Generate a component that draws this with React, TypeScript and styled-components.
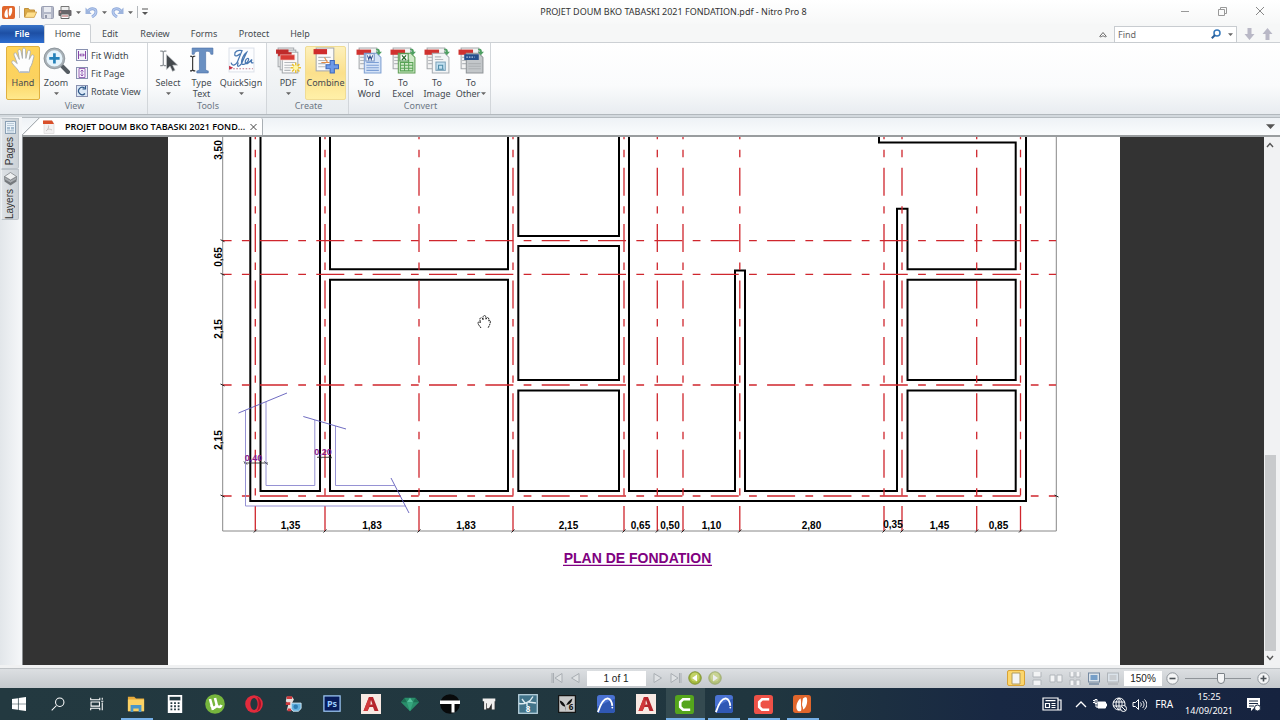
import React from "react";
import styled, { createGlobalStyle, css } from "styled-components";

const GlobalStyle = createGlobalStyle`
  * { box-sizing: border-box; }
  html, body { margin: 0; padding: 0; }
  body { font-family: "Noto Sans", "Open Sans", sans-serif; font-size: 9px; color: #444a50; background: #fff; }
  button, input { font: inherit; color: inherit; }
  button { border: 0; padding: 0; background: none; }
  svg { display: block; flex: none; }
`;

const Window = styled.div`
  display: flex;
  flex-direction: column;
  height: 100vh;
  min-height: 400px;
  overflow: hidden;
`;

/* ---------- title bar ---------- */

const TitleBar = styled.header`
  display: grid;
  grid-template-columns: auto 1fr auto;
  align-items: center;
  flex: none;
  height: 24px;
  padding: 0 14px 0 2px;
  background: linear-gradient(#ffffff, #f7f8f8);
`;

const QuickAccess = styled.div`
  display: flex;
  align-items: center;
  gap: 4px;
`;

const Divider = styled.span`
  width: 1px;
  height: 12px;
  background: #b4b8bc;
`;

const WindowTitle = styled.h1`
  margin: 0;
  padding-left: 20px;
  text-align: center;
  font-size: 9px;
  font-weight: 400;
  line-height: 24px;
  color: #333;
  white-space: nowrap;
`;

const WindowButtons = styled.div`
  display: flex;
  justify-content: flex-end;
  gap: 24px;
`;

const IconButton = styled.button`
  display: flex;
  align-items: center;
  justify-content: center;
`;

/* ---------- ribbon ---------- */

const TabRow = styled.nav`
  display: flex;
  align-items: flex-end;
  flex: none;
  height: 19px;
  padding-right: 7px;
  background: #f6f7f7;
  box-shadow: inset 0 -1px #ccd0d4;
`;

const RibbonTab = styled.button<{ $width: number; $kind?: "file" | "active" }>`
  width: ${(p) => p.$width}px;
  height: 18px;
  line-height: 18px;
  text-align: center;
  ${(p) =>
    p.$kind === "file" &&
    css`
      background: linear-gradient(#3873c8, #1d4fa4 45%, #2d6dd0);
      border-radius: 2px 2px 0 0;
      color: #fff;
      font-weight: 600;
    `}
  ${(p) =>
    p.$kind === "active" &&
    css`
      height: 19px;
      background: #fff;
      border: 1px solid #ccd0d4;
      border-bottom: 0;
      border-radius: 2px 2px 0 0;
    `}
`;

const FindArea = styled.div`
  display: flex;
  align-items: center;
  gap: 7px;
  height: 18px;
  margin-left: auto;
`;

const FindBox = styled.label`
  display: flex;
  align-items: center;
  gap: 7px;
  width: 123px;
  height: 17px;
  padding: 0 3px;
  background: #fff;
  border: 1px solid #c8ccd0;
`;

const FindInput = styled.input`
  flex: 1;
  min-width: 0;
  height: 15px;
  padding: 0;
  border: 0;
  outline: 0;
  background: none;
  &::placeholder { color: #666; opacity: 1; }
`;

const Ribbon = styled.section`
  display: flex;
  flex: none;
  height: 72px;
  background: linear-gradient(#ffffff, #fafbfc 60%, #e8ecf0);
  border-bottom: 1px solid #b2b8bd;
`;

const Group = styled.div<{ $width: number; $tinted?: boolean }>`
  display: flex;
  flex-direction: column;
  width: ${(p) => p.$width}px;
  padding-top: 3px;
  border-right: 1px solid #d2d6da;
  background: ${(p) => (p.$tinted ? "linear-gradient(#f8f9fa, #e9edf0)" : "none")};
`;

const GroupItems = styled.div<{ $pad: number }>`
  display: flex;
  height: 54px;
  padding-left: ${(p) => p.$pad}px;
`;

const GroupLabel = styled.span`
  padding-left: 2px;
  text-align: center;
  line-height: 12px;
  color: #6c7784;
`;

const ToolButton = styled.button<{ $width: number; $state?: "on" | "hover" }>`
  display: flex;
  flex-direction: column;
  align-items: center;
  flex: none;
  gap: 3px;
  width: ${(p) => p.$width}px;
  height: 54px;
  line-height: 11px;
  border: 1px solid transparent;
  border-radius: 2px;
  white-space: nowrap;
  text-align: center;
  ${(p) =>
    p.$state === "on" &&
    css`
      border-color: #e0b040;
      background: linear-gradient(#ffd45a, #fbd25f 60%, #ffe98d);
    `}
  ${(p) =>
    p.$state === "hover" &&
    css`
      border-color: #f0dc94;
      background: linear-gradient(#fdf0bb, #fbe08c 50%, #fff0a8);
    `}
`;

const SmallTools = styled.div`
  display: flex;
  flex-direction: column;
  padding-left: 4px;
`;

const SmallTool = styled.button`
  display: flex;
  align-items: center;
  gap: 3px;
  height: 18px;
  white-space: nowrap;
`;

/* ---------- work area ---------- */

const Work = styled.main`
  display: flex;
  flex: 1;
  min-height: 0;
  padding-top: 2px;
  background: #d3d9de;
`;

const Sidebar = styled.aside`
  display: flex;
  flex-direction: column;
  flex: none;
  width: 22px;
  padding: 1px 3px 0 1px;
  background: linear-gradient(90deg, #e2e6ea, #f4f6f8 90%);
`;

const SideTab = styled.button`
  display: flex;
  flex-direction: column;
  align-items: center;
  gap: 3px;
  height: 51px;
  padding-top: 2px;
  background: linear-gradient(90deg, #dde1e5, #ccd2d7);
  border: 1px solid #bcc3c9;
  border-left-color: #edf0f2;
  border-radius: 0 0 2px 0;
`;

const SideLabel = styled.span`
  writing-mode: vertical-rl;
  transform: rotate(180deg);
  font-family: "Liberation Sans", sans-serif;
  font-size: 10px;
  line-height: 14px;
  color: #333;
`;

const Viewer = styled.div`
  display: flex;
  flex-direction: column;
  flex: 1;
  min-width: 0;
`;

const DocTabs = styled.div`
  display: flex;
  align-items: stretch;
  justify-content: space-between;
  flex: none;
  height: 20px;
  padding-right: 5px;
  background: linear-gradient(#eef2f6, #fafcfd);
  border-top: 1px solid #b5bbc0;
  border-bottom: 2px solid #999d9f;
`;

const DocTab = styled.div`
  display: flex;
  align-items: center;
  width: 241px;
  padding-right: 4px;
  background: linear-gradient(135deg, transparent 12px, #a9afb4 12px, #ffffff 13px);
  border-right: 1px solid #a9afb4;
  border-radius: 0 2px 0 0;
`;

const DocName = styled.span`
  flex: 1;
  padding-left: 10px;
  font-family: "Open Sans", sans-serif;
  font-size: 9px;
  font-weight: 600;
  color: #000;
  white-space: nowrap;
`;

const ViewerBody = styled.div`
  display: flex;
  flex: 1;
  min-height: 0;
`;

const Canvas = styled.div`
  display: flex;
  justify-content: center;
  align-items: stretch;
  flex: 1;
  min-width: 0;
  overflow: hidden;
  background: #333333;
  border-left: 1px solid #8b8f92;
`;

const Sheet = styled.div`
  flex: none;
  width: 952px;
  overflow: hidden;
  background: #fff;
`;

const ScrollTrack = styled.div`
  display: flex;
  flex-direction: column;
  align-items: center;
  flex: none;
  width: 16px;
  padding: 5px 4px 4px 0;
  background: #f1f2f3;
`;

const ScrollGap = styled.div<{ $grow: number }>`
  flex: ${(p) => p.$grow} 1 0;
`;

const ScrollThumb = styled.div`
  flex: 196 1 0;
  width: 11px;
  background: #c8cacc;
`;

/* ---------- status bar ---------- */

const StatusBar = styled.footer`
  display: grid;
  grid-template-columns: 1fr auto 1fr;
  align-items: center;
  flex: none;
  height: 23px;
  padding: 3px 10px 0 2px;
  background: linear-gradient(#f0f1f2 3px, #9fa4a8 3px, #dcdfe2 4px, #c5c9cd);
`;

const PageNav = styled.div`
  display: flex;
  align-items: center;
  gap: 6px;
`;

const StatusField = styled.input<{ $width: number }>`
  width: ${(p) => p.$width}px;
  height: 15px;
  padding: 0;
  border: 0;
  background: #fff;
  text-align: center;
  color: #222;
  font-family: "Liberation Sans", sans-serif;
  font-size: 10px;
`;

const ViewControls = styled.div`
  display: flex;
  align-items: center;
  justify-content: flex-end;
  gap: 4px;
`;

const ViewMode = styled.button<{ $on?: boolean }>`
  display: flex;
  align-items: center;
  justify-content: center;
  width: ${(p) => (p.$on ? 18 : 15)}px;
  height: 16px;
  border-radius: 2px;
  border: ${(p) => (p.$on ? "1px solid #d8a236" : "0")};
  background: ${(p) => (p.$on ? "#fcd66c" : "none")};
`;

const ZoomSlider = styled.input`
  width: 66px;
  height: 14px;
  margin: 0 2px;
  appearance: none;
  background: linear-gradient(#8f9499, #8f9499) center / 100% 1px no-repeat;
  &::-webkit-slider-thumb {
    appearance: none;
    width: 8px;
    height: 11px;
    background: #f4f5f6;
    border: 1px solid #7c8288;
    border-radius: 1px 1px 4px 4px;
  }
`;

/* ---------- taskbar ---------- */

const Taskbar = styled.div`
  display: flex;
  justify-content: space-between;
  flex: none;
  height: 32px;
  background: linear-gradient(90deg, #233940, #20363f 60%, #182843 78%, #16233f);
  color: #fff;
`;

const AppGrid = styled.div`
  display: grid;
  grid-template-columns: repeat(21, 1fr);
  width: 823px;
`;

const AppButton = styled.button<{ $run?: boolean; $active?: boolean }>`
  display: flex;
  align-items: center;
  justify-content: center;
  padding-right: 2px;
  background: ${(p) =>
    p.$active
      ? "linear-gradient(#76b0e8, #76b0e8) bottom / 100% 2px no-repeat, #344a50"
      : p.$run
        ? "linear-gradient(#76b0e8, #76b0e8) 3px 100% / 32px 2px no-repeat"
        : "none"};
`;

const Tray = styled.div`
  display: flex;
  align-items: center;
  gap: 5px;
  padding-right: 19px;
`;

const Lang = styled.span`
  padding: 0 7px 0 3px;
  font-size: 10px;
`;

const Clock = styled.div`
  margin-right: 8px;
  text-align: center;
  line-height: 14px;
`;

/* ---------- small glyphs ---------- */

const Caret = ({ size = 5, color = "#666" }: { size?: number; color?: string }) => (
  <svg width={size} height={size} viewBox="0 0 6 6">
    <path d="M0 1.5h6L3 4.7z" fill={color} />
  </svg>
);

const NitroLogo = ({ size = 13 }: { size?: number }) => (
  <svg width={size} height={size} viewBox="0 0 20 20">
    <rect width="20" height="20" rx="3" fill="#e0662c" />
    <path d="M4.500 16.500C2.500 13 5 6 8.500 4l1 8.500 1.500-8.500c2.500-2 4-2 4.500 0 1 5-1 10-4 12.500l-1.500-5-1 6c-1.500 1-3.500 1-4.500-1z" fill="#fff" />
    <path d="M9.500 3v9.500l1.800 5" stroke="#e0662c" strokeWidth="1.200" fill="none" />
  </svg>
);

const FolderIcon = () => (
  <svg width="13" height="13" viewBox="0 0 13 13">
    <path d="M.5 11V2.500h4l1 1.500h5v2" fill="#dba943" stroke="#c08f3c" />
    <path d="M.7 11.400 3 6h9.700l-2.500 5.400z" fill="#ffdf8a" stroke="#cb9c48" strokeWidth=".8" />
  </svg>
);

const SaveIcon = () => (
  <svg width="13" height="13" viewBox="0 0 13 13">
    <rect x=".5" y=".5" width="12" height="12" rx="1" fill="#b3b8c8" stroke="#9a9fb2" />
    <rect x="3" y="1" width="7" height="5" fill="#e9ebf1" />
    <rect x="3" y="8" width="7" height="4.500" fill="#dfe1e8" />
    <rect x="4" y="9" width="2" height="3" fill="#9196a8" />
  </svg>
);

const PrintIcon = () => (
  <svg width="14" height="13" viewBox="0 0 14 13">
    <path d="M3 4V.5h8V4" fill="#eee" stroke="#777" />
    <rect x=".5" y="4" width="13" height="6" rx="1" fill="#69666a" />
    <path d="M3 8h8v4.500H3z" fill="#fff" stroke="#666" />
    <path d="M4 10h6" stroke="#a55" />
    <circle cx="2.500" cy="6" r=".8" fill="#e5a0a0" />
  </svg>
);

const UndoIcon = ({ flip }: { flip?: boolean }) => (
  <svg width="13" height="12" viewBox="0 0 13 12">
    <g transform={flip ? "matrix(-1 0 0 1 13 0)" : undefined}>
      <path d="M3 5.500C5 1.500 11 2 11 6c0 2-1.500 3.500-4 5" fill="none" stroke="#8fa9d9" strokeWidth="2.800" />
      <path d="M3 5.500C5 1.500 11 2 11 6c0 2-1.500 3.500-4 5" fill="none" stroke="#b9ccf0" strokeWidth="1.200" />
      <path d="M.5 1.500v6.500h6.200z" fill="#9db4dd" />
    </g>
  </svg>
);

const HandIcon = () => (
  <svg width="27" height="27" viewBox="0 0 26 26">
    <path d="M9 24.500c-1-3-5-6-7-9-1-2 1-3 2.500-1.600L7 16 4 8C3.300 5.500 5.600 4.700 6.400 6.800L9 12 7.700 4.500c-.3-2.500 2.300-3 2.900-.5L12 11V3c0-2.700 2.900-2.600 3 0l.3 8 1.600-6.500c.6-2.300 3-1.700 2.700.7L18.500 12l1.900-3.500c1-1.800 3.100-.9 2.500 1.200-1.200 4-1.400 7.300-3.700 10.300l-.7 4.500z" fill="#fdfdfd" stroke="#a3a9b0" strokeWidth=".8" />
    <path d="M9.500 24h8.500" stroke="#b9c0c8" strokeWidth="1.500" />
  </svg>
);

const ZoomIcon = () => (
  <svg width="27" height="27" viewBox="0 0 26 26">
    <path d="m17 17 7 7" stroke="#555c62" strokeWidth="4" strokeLinecap="round" />
    <circle cx="11" cy="11" r="9" fill="#e6f4fc" stroke="#a9b1b7" strokeWidth="2.400" />
    <circle cx="11" cy="11" r="10" fill="none" stroke="#7b848b" strokeWidth=".6" />
    <path d="M11 6v10M6 11h10" stroke="#2581b9" strokeWidth="2.600" />
  </svg>
);

const FitIcon = ({ kind }: { kind: "width" | "page" | "rotate" }) => (
  <svg width="12" height="12" viewBox="0 0 12 12">
    <rect x=".5" y=".5" width="11" height="11" fill={kind === "rotate" ? "#dbe8f6" : "#f5f4fb"} stroke="#8991b0" />
    {kind === "width" && <path d="M2.500 2v8M9.500 2v8M4 6h4M5 4.500 3.700 6 5 7.500M7 4.500 8.300 6 7 7.500" fill="none" stroke="#8745a8" />}
    {kind === "page" && <path d="M3 1.500h6v9H3zM6 3v6M4.500 4.500 6 3l1.500 1.500M4.500 7.500 6 9l1.500-1.500" fill="none" stroke="#8745a8" strokeWidth=".8" />}
    {kind === "rotate" && <path d="M9 8.500A3.700 3.700 0 1 1 8.500 3M9.500 1v3h-3" fill="none" stroke="#2d5687" strokeWidth="1.200" />}
  </svg>
);

const SelectIcon = () => (
  <svg width="27" height="27" viewBox="0 0 26 26">
    <path d="M5 4h2l1 1 1-1h2M8 5v12M5 18h2l1-1 1 1h2" fill="none" stroke="#8c9196" strokeWidth="1.200" />
    <path d="M11 7v15l3.500-3.500 2.300 5 2.600-1.200-2.300-4.800H22z" fill="#44494d" stroke="#d2d5d8" strokeWidth=".6" />
  </svg>
);

const TypeIcon = () => (
  <svg width="27" height="27" viewBox="0 0 26 26">
    <path d="M4 1h20v6h-2c-.3-2-1-2.800-3-2.800h-2V21c0 1.500.7 2 2.500 2v2h-11v-2c1.800 0 2.500-.5 2.500-2V4.200H9C7 4.200 6.300 5 6 7H4z" fill="#6a90c2" stroke="#4a70a6" strokeWidth=".6" />
    <path d="M2 9h1.500l1 1 1-1H7M4.500 10v12M2 23h1.500l1-1 1 1H7" fill="none" stroke="#222" />
  </svg>
);

const SignIcon = () => (
  <svg width="27" height="27" viewBox="0 0 26 26">
    <rect x="1" y="1" width="24" height="23" fill="#fcfdff" stroke="#dde2ea" />
    <path d="M3 15c1 4 5 3 7-3l3.500-8.500c-4-1-7.500 1-7 4 .4 2 3 1 5-1M10 15c-2 4 0 5 3 1l5-11c-3 2-5 7-5 10s4 2 6-1 0-4-1.500-2-1 4 .5 4 3-2 5-4c-1 3-1 4 1.500 3" fill="none" stroke="#4877b1" strokeWidth="1.200" />
    <path d="M2 21h22" stroke="#bf7484" strokeDasharray="1.500 1.500" />
    <path d="m1 18 4 2-4 2z" fill="#c42f45" />
  </svg>
);

const PdfIcon = () => (
  <svg width="27" height="27" viewBox="0 0 26 26">
    <rect x="3" y="1" width="15" height="18" fill="#f5f5f5" stroke="#a5a9ad" />
    <rect x="5" y="3" width="15" height="19" fill="#f8f8f8" stroke="#a5a9ad" />
    <rect x="7" y="5" width="15" height="20" fill="#fafafa" stroke="#a5a9ad" />
    <path d="M9 15h11M9 17.500h8M9 20h6M9 22.500h6" stroke="#b5b9bd" />
    <path d="M1 2.500h12v4H1zM3 5h13v4H3z" fill="#bf2a2a" />
    <path d="M5 7.500h14v5H5z" fill="#d83a34" stroke="#f0c0bb" strokeWidth=".6" />
    <path d="M20 15v10M15 20h10M16.500 16.500l7 7M23.500 16.500l-7 7" stroke="#e8bf2e" strokeWidth="1.400" />
    <circle cx="20" cy="20" r="2.400" fill="#fff8a8" />
  </svg>
);

const CombineIcon = () => (
  <svg width="27" height="27" viewBox="0 0 26 26">
    <rect x="4" y="1" width="17" height="22" fill="#fafafa" stroke="#a5a9ad" />
    <path d="M1.500 2h13v5h-13z" fill="#cf2b2b" />
    <path d="M6 10h12M6 13h9M6 16h7M6 19h7" stroke="#b5b9bd" />
    <path d="m12 10 3 5M9 15h8" stroke="#e38d48" />
    <path d="M17.500 13h4v4h4v4h-4v4h-4v-4h-4v-4h4z" fill="#6d9ae8" stroke="#3d68bb" />
  </svg>
);

const ConvertIcon = ({ kind }: { kind: "word" | "excel" | "image" | "other" }) => {
  const tone = { word: "#d5e3f7", excel: "#cfe9c8", image: "#f3f5f6", other: "#c3c7ca" }[kind];
  const line = { word: "#7e9fd1", excel: "#5f9e55", image: "#a7adb3", other: "#8f9498" }[kind];
  return (
    <svg width="27" height="27" viewBox="0 0 26 26">
      <path d="M3 1h17v20H3z" fill="#f3f3f3" stroke="#a5a9ad" />
      <path d="M4 10h5M4 13h5M4 16h5" stroke="#b5b9bd" />
      <path d="M.5 2.500h14v5H.500z" fill="#d0322f" />
      <path d="M8 6h12l4 4v15H8z" fill={tone} stroke={line} />
      <path d="M20 1.500c2 0 3 1 3 3h2l-3 3.500L19 4.500h2c0-1-.5-1.500-2-1.500z" fill="#4e9f62" />
      {kind === "word" && (
        <>
          <path d="M10 15h12M10 17.500h12M10 20h12M10 22.500h12" stroke="#7c9fd5" />
          <rect x="9.500" y="6.500" width="8" height="7" fill="#fff" stroke="#7190c4" />
          <path d="m11 8 1.300 4 1.200-3.500 1.200 3.500L16 8" fill="none" stroke="#2b4c8c" />
        </>
      )}
      {kind === "excel" && (
        <>
          <path d="M10 15h12v8H10zM10 17.500h12M10 20.500h12M14 15v8M18 12v11" fill="none" stroke="#58a355" />
          <rect x="9.500" y="6.500" width="8" height="7" fill="#fff" stroke="#459044" />
          <path d="m11.500 8 4 4.500m0-4.500-4 4.500" stroke="#276b2a" strokeWidth="1.200" />
        </>
      )}
      {kind === "image" && (
        <>
          <rect x="11.500" y="14.500" width="9" height="8" fill="#c2e0f0" stroke="#7fa4ba" />
          <path d="M13 21.500h6M14 21v-3.500h4V21" fill="none" stroke="#4d8ba8" />
          <path d="M10.500 9.500h6M10.500 12h8" stroke="#b5b9bd" />
        </>
      )}
      {kind === "other" && (
        <>
          <rect x="6" y="7" width="14" height="5.500" fill="#264f8c" />
          <path d="M8 9.700h8" stroke="#b9cbe6" strokeWidth="1.200" strokeDasharray="1.500 1" />
          <path d="M10 16h12M10 18.500h12M10 21h12" stroke="#adb1b4" />
        </>
      )}
    </svg>
  );
};

const PdfFileIcon = () => (
  <svg width="12" height="14" viewBox="0 0 12 14">
    <path d="M1 1h8l2 3v9.500H1z" fill="#f3f2f2" stroke="#dcdada" strokeWidth=".7" />
    <path d="M0 .5h9L11 4H0z" fill="#d9502b" />
    <path d="M3 11c2-1 3-4 2.500-5.500M4 9.500c2-.6 3-.5 5 .5" fill="none" stroke="#c9c5c5" />
  </svg>
);

const PagesIcon = () => (
  <svg width="11" height="13" viewBox="0 0 11 13">
    <rect x=".5" y=".5" width="10" height="12" fill="#eaf2f9" stroke="#8ba0b4" />
    <path d="M2 2.500h7M2 4.500h7M2 9.500h7M2 11h7" stroke="#b9cad8" />
    <path d="M2 6h3v2.500H2zM6 6h3v2.500H6z" fill="#a5bccf" />
  </svg>
);

const LayersIcon = () => (
  <svg width="13" height="14" viewBox="0 0 13 14">
    <path d="M.5 7.500v2l6 4 6-4v-2l-6 3z" fill="#777b7f" />
    <path d="M.5 4.500v3l6 3.500 6-3.500v-3L6.500 8z" fill="#a7abaf" stroke="#5e6266" strokeWidth=".5" />
    <path d="m6.500.5 6 4-6 3.500-6-3.500z" fill="#eef0f1" stroke="#75797d" strokeWidth=".7" />
  </svg>
);

const FindArrow = ({ up }: { up?: boolean }) => (
  <svg width="11" height="12" viewBox="0 0 11 12">
    <path d={up ? "M5.500 0 10.500 6H7.500v6h-4V6h-3z" : "M5.500 12 10.500 6H7.500V0h-4v6h-3z"} fill="#b9b8c6" />
  </svg>
);

const NavArrow = ({ kind }: { kind: "first" | "prev" | "next" | "last" }) => (
  <svg width="12" height="12" viewBox="0 0 12 12" fill="#dfe2e4" stroke="#a9aeb3">
    {kind === "first" && <path d="M1 1v10M2.500 1v10M11 1.500v9L4 6z" />}
    {kind === "prev" && <path d="M10 1.500v9L2.500 6z" />}
    {kind === "next" && <path d="M2 1.500v9L9.500 6z" />}
    {kind === "last" && <path d="M11 1v10M9.500 1v10M1 1.500v9L8 6z" />}
  </svg>
);

const GreenArrow = ({ back }: { back?: boolean }) => (
  <svg width="14" height="14" viewBox="0 0 14 14" opacity={back ? 1 : 0.6}>
    <circle cx="7" cy="7" r="6.200" fill="#a3b93d" stroke="#7c9130" />
    <circle cx="7" cy="6" r="4.500" fill="#c2d266" />
    <path d={back ? "M9 3.500v7L4 7z" : "M5 3.500v7L10 7z"} fill="#fff" />
  </svg>
);

const modePaths = [
  "M3 1h8v11H3z",
  "M3 0v5h8V0M3 13V8h8v5",
  "M1 3h5v7H1zM8 3h5v7H8z",
  "M2 0v5h4V0M8 0v5h4V0M2 13V8h4v5M8 13V8h4v5",
];

const ModeIcon = ({ index }: { index: number }) => (
  <svg width="14" height="13" viewBox="0 0 14 13">
    {index < 4 ? (
      <path d={modePaths[index]} fill="#f3f4f5" stroke={index ? "#b0b5ba" : "#b09b60"} />
    ) : (
      <>
        <rect x="1.500" y="1" width="11" height="9" fill="#dbe3ea" stroke={index === 4 ? "#7388a0" : "#b0b5ba"} />
        <rect x="3.500" y="3" width="7" height="5" fill={index === 4 ? "#769fc8" : "#c8ccd0"} />
        <path d="M2 12h10" stroke={index === 4 ? "#7388a0" : "#b0b5ba"} strokeWidth="1.500" />
      </>
    )}
  </svg>
);

const RoundSign = ({ plus }: { plus?: boolean }) => (
  <svg width="13" height="13" viewBox="0 0 13 13">
    <circle cx="6.500" cy="6.500" r="5.700" fill="#f4f5f6" stroke="#8e949a" />
    <path d={plus ? "M3.500 6.500h6M6.500 3.500v6" : "M3.500 6.500h6"} stroke="#4a5056" strokeWidth="1.600" />
  </svg>
);

/* ---------- taskbar icons, drawn on a 20 x 20 grid ---------- */

const SwallowArt = () => (
  <>
    <rect width="20" height="20" rx="3" fill="#4a72d2" />
    <path d="M0 13 20 4v13a3 3 0 0 1-3 3H3a3 3 0 0 1-3-3z" fill="#3058b4" />
    <path d="M1 19C4 10 8 3 12.500 4c3 .7 4 4 4.500 8" fill="none" stroke="#fff" strokeWidth="2" />
    <circle cx="17" cy="14" r="1" fill="#fff" />
  </>
);

const AutocadArt = () => (
  <>
    <rect width="20" height="20" fill="#f8e9e3" />
    <path d="M2.500 17 8 3h4l5.500 14h-4L12 13H8.500l-2 4zM9 10.500h2.500L10 6z" fill="#b6252c" />
    <path d="m6.500 17 3-7.500L8 3 2.500 17z" fill="#d1383b" />
  </>
);

const CamtasiaArt = ({ color }: { color: string }) => (
  <>
    <rect width="20" height="20" rx="3" fill={color} />
    <path d="M16 4.500H8.500L5.500 7.500v5l3 3H16" fill="none" stroke="#fff" strokeWidth="2.800" />
  </>
);

const apps: { name: string; art: React.ReactNode; run?: boolean; active?: boolean; size?: number }[] = [
  { name: "Start", size: 14, art: <path d="M0 3 8.500 1.700v7.800H0zM9.500 1.600 20 0v9.500H9.500zM0 10.500h8.500v7.800L0 17zM9.500 10.500H20V20L9.500 18.400z" fill="#fff" /> },
  { name: "Search", size: 14, art: <path d="M7.500 12.500 1 19M12.500 1.500a6 6 0 1 1 0 12 6 6 0 0 1 0-12z" fill="none" stroke="#fff" strokeWidth="1.500" /> },
  { name: "Task view", size: 14, art: <path d="M1 1v3h13V1M1 19v-3h13v3M1.500 7h12v6h-12zM17.500 1v3M17.500 8v11M16 6h3" fill="none" stroke="#fff" strokeWidth="1.500" /> },
  {
    name: "File Explorer",
    run: true,
    art: (
      <>
        <path d="M1 2h7l2 2h9v14H1z" fill="#e7a93a" />
        <path d="M1 5h18v13H1z" fill="#fbd265" />
        <path d="M4 19v-8h12v8h-3v-4H7v4z" fill="#4996c9" />
      </>
    ),
  },
  {
    name: "Calculator",
    art: (
      <>
        <rect x="2" y="0" width="16" height="20" fill="#fff" />
        <path d="M4 2h12v4H4z" fill="#233940" />
        <path d="M5 9h10M5 12.500h10M5 16h10" stroke="#233940" strokeWidth="2" strokeDasharray="2 2" />
      </>
    ),
  },
  {
    name: "uTorrent",
    size: 20,
    art: (
      <>
        <circle cx="10" cy="10" r="9.800" fill="#76b53d" />
        <path d="m5 5 3 11M6 11c2 5 6 2 5.500-1L10 4m1.500 6c1 4 4 3.500 5 1" fill="none" stroke="#fff" strokeWidth="2.600" />
      </>
    ),
  },
  {
    name: "Opera",
    art: (
      <>
        <circle cx="10" cy="10" r="9.800" fill="#e22b3c" />
        <path d="M13 2a9 9 0 0 1 0 16c3-3 3-13 0-16z" fill="#aa1227" />
        <ellipse cx="10" cy="10" rx="4" ry="6.800" fill="#22383f" />
      </>
    ),
  },
  {
    name: "Simulator",
    art: (
      <>
        <path d="M3 2h6l2 3-2 4 3 8H3l2-7-3-3z" fill="#e7dedd" />
        <path d="M3 1.500h6v3H3zM2 8h5v3H2zM4 15h4v3H4z" fill="#cf3a3e" />
        <path d="M8 9h11v6l-3 3h-6l-2-3z" fill="#62b0df" stroke="#d7eaf5" />
        <circle cx="13" cy="13" r="2.500" fill="#2e7db3" />
      </>
    ),
  },
  {
    name: "Photoshop",
    art: (
      <>
        <rect x="1" y="1" width="18" height="17" fill="#071c5c" stroke="#9dc7f5" strokeWidth="1.400" />
        <text x="10" y="13.500" textAnchor="middle" fontFamily="Noto Sans, sans-serif" fontWeight="700" fontSize="10" fill="#9ccbfa">Ps</text>
      </>
    ),
  },
  { name: "AutoCAD", size: 20, art: <AutocadArt /> },
  {
    name: "Gem",
    art: (
      <>
        <path d="M4 3h12l4 5-10 10L0 8z" fill="#2a8e6b" />
        <path d="M4 3 6.500 8H0zM16 3l-2.500 5H20z" fill="#1c6f53" />
        <path d="M10 3 6.500 8h7z" fill="#55c39c" />
        <path d="M6.500 8h7L10 18z" fill="#36a67e" />
      </>
    ),
  },
  {
    name: "T tool",
    size: 20,
    art: (
      <>
        <circle cx="10" cy="10" r="9.800" fill="#080a0b" />
        <path d="M0 6.500h20V10h-5.500V18.500h-3V10H0z" fill="#fff" />
      </>
    ),
  },
  {
    name: "M tool",
    size: 14,
    art: (
      <>
        <path d="M2 3h17v15H2z" fill="#2c2c2c" />
        <path d="M1 2h18v4h-1v12h-4V9l-4 7H7V9H6v9H3V6H1z" fill="#f1efee" />
      </>
    ),
  },
  {
    name: "Plant 8",
    size: 20,
    art: (
      <>
        <rect x=".7" y=".7" width="18.600" height="18.600" fill="#42748a" stroke="#b6d0dc" strokeWidth="1.300" />
        <path d="M1 9.500c5 1 11-1 14-7M7 9 4 5M10 8l8 1M9 9v3" fill="none" stroke="#dcebf1" strokeWidth="1.400" />
        <text x="10" y="18" textAnchor="middle" fontFamily="Noto Sans, sans-serif" fontWeight="700" fontSize="8" fill="#fff">8</text>
      </>
    ),
  },
  {
    name: "Plant 6",
    art: (
      <>
        <rect x=".7" y=".7" width="18.600" height="18.600" fill="#c9c9c9" stroke="#111" strokeWidth="1.300" />
        <path d="M8 18c0-7 3-11 8-14-1 5-3 7-7 7M7.500 13C4 12 2 9 2 6c3 1 5 3 6 6" fill="#111" />
        <text x="14.500" y="17" textAnchor="middle" fontFamily="Noto Sans, sans-serif" fontWeight="700" fontSize="9" fill="#111">6</text>
      </>
    ),
  },
  { name: "Graitec", art: <SwallowArt /> },
  { name: "AutoCAD drawing", size: 20, art: <AutocadArt /> },
  { name: "Camtasia", active: true, size: 19, art: <CamtasiaArt color="#55a51c" /> },
  { name: "Graitec project", run: true, art: <SwallowArt /> },
  { name: "Camtasia recorder", run: true, size: 19, art: <CamtasiaArt color="#ee5147" /> },
];

/* ---------- foundation plan ---------- */

const axesX = [255.3, 325, 419, 513, 624, 657.3, 683, 739.8, 884, 902, 976.7, 1020.5];
const axesY = [240.7, 274.3, 385, 496];

const walls = [
  "M250.300 130V501H1026V130",
  "M260.500 130V491H320V130",
  "M330 130V269.300H508V130",
  "M330 279.700H508V491H330z",
  "M518.300 130V236H619V130",
  "M518.300 246H619V380H518.300z",
  "M518.300 390.500H619V491H518.300z",
  "M629 130V491H735V270.500H745V491H897V208.700H907.500V269.300H1015.700V142.500H879V130",
  "M907.500 279.700H1015.700V380H907.500z",
  "M907.500 390.500H1015.700V491H907.500z",
];

const widthLabels: [string, number, number][] = [
  ["1,35", 290.5, 529], ["1,83", 372, 529], ["1,83", 466, 529], ["2,15", 568.5, 529],
  ["0,65", 640.5, 529], ["0,50", 670, 529], ["1,10", 711.5, 529], ["2,80", 811.5, 529],
  ["0,35", 893, 528], ["1,45", 939.5, 529], ["0,85", 998.5, 529],
];

const heightLabels: [string, number][] = [["3,50", 150], ["0,65", 257], ["2,15", 329], ["2,15", 440]];

const FoundationPlan = () => (
  <svg width="952" height="529" viewBox="168 137 952 529" fontFamily="Liberation Sans, Arial, sans-serif" fontWeight="700" role="img" aria-label="Plan de fondation">
    <path d="M222.700 130V531H1056.300V130" fill="none" stroke="#888" strokeWidth="1" />
    <g fill="none" stroke="#000" strokeWidth="2">
      {walls.map((d) => <path key={d} d={d} />)}
    </g>
    <g stroke="#cf262d" strokeWidth="1.300">
      {axesX.map((x) => <path key={x} d={`M${x} 111.300V531`} strokeDasharray="28 10.500 7.400 10.500" />)}
      {axesY.map((y) => <path key={y} d={`M222.700 ${y}H1056`} strokeDasharray="28 10.300 7.750 10.300" strokeDashoffset="19.100" />)}
    </g>
    <g stroke="#222" strokeWidth="1">
      {axesX.map((x) => <path key={x} d={`m${x - 1.5} 532.500 3-3`} />)}
      {axesY.map((y) => <path key={y} d={`M220.500 ${y - 1}l4 2`} />)}
      <path d="M1054.500 495l4 2" />
      <path d="M244 463h24M317 457.300h15" strokeWidth=".8" />
      <path d="m244 461.500 3 3M264.500 461.500l3 3M319 456l2 3M329 456l2 3" />
    </g>
    <g fill="none" stroke="#8a86cf" strokeWidth=".9">
      <path d="M245.500 410.500V506H405.500M266 402V485.500H314.800V420M335.500 426V485.500H394.500" />
      <path d="M238.500 413 287 393M303.300 416.500 346 429M391 478l18 35" stroke="#5f5aba" />
    </g>
    <g fontSize="10" fill="#000" textAnchor="middle">
      {widthLabels.map(([t, x, y]) => <text key={x} x={x} y={y}>{t}</text>)}
      {heightLabels.map(([t, y]) => <text key={y} transform={`translate(221.500 ${y}) rotate(-90)`}>{t}</text>)}
    </g>
    <g fontSize="9" fill="#8b1a8b" textAnchor="middle">
      <text x="253.500" y="461">0,40</text>
      <text x="323" y="455">0,20</text>
    </g>
    <text x="637.500" y="563" fontSize="14" fill="#800080" textAnchor="middle">PLAN DE FONDATION</text>
    <path d="M563 565.300H712" stroke="#800080" strokeWidth="1.300" />
    <g fill="#fff" stroke="#222" strokeWidth="1" strokeDasharray="2 .6">
      <path d="M481 328c-1-2-3-3-3-5 0-1.500 1.500-1.500 2.500 0 0-2-1.500-4 0-5s2 0 2.500 2c0-3 0-4.500 1.500-4.500s1.500 2 1.500 4c.5-2 2-2.500 2.500-1.500s.5 2 .3 3c1-1 1.700-.5 1.500 1-.3 3-1.300 4-2.300 6" />
    </g>
  </svg>
);

const convertTargets: ["word" | "excel" | "image" | "other", string][] = [
  ["word", "Word"], ["excel", "Excel"], ["image", "Image"], ["other", "Other"],
];

const OtherLabel = styled.span`
  display: flex;
  align-items: center;
  gap: 1px;
`;

export default function App() {
  return (
    <Window>
      <GlobalStyle />
      <TitleBar>
        <QuickAccess>
          <NitroLogo />
          <Divider />
          <IconButton aria-label="Open"><FolderIcon /></IconButton>
          <IconButton aria-label="Save"><SaveIcon /></IconButton>
          <IconButton aria-label="Print"><PrintIcon /></IconButton>
          <Caret />
          <IconButton aria-label="Undo"><UndoIcon /></IconButton>
          <Caret />
          <IconButton aria-label="Redo"><UndoIcon flip /></IconButton>
          <Caret />
          <Divider />
          <svg width="6" height="8" viewBox="0 0 6 8"><path d="M0 1h6" stroke="#555" /><path d="M0 4h6L3 7z" fill="#555" /></svg>
        </QuickAccess>
        <WindowTitle>PROJET DOUM BKO TABASKI 2021 FONDATION.pdf - Nitro Pro 8</WindowTitle>
        <WindowButtons>
          <IconButton aria-label="Minimize"><svg width="13" height="12" viewBox="0 0 13 12"><path d="M2 5.500h8" stroke="#999" /></svg></IconButton>
          <IconButton aria-label="Restore"><svg width="13" height="12" viewBox="0 0 13 12"><path d="M2.500 3.500h6v6h-6zM4.500 3.500v-2h6v6h-2" fill="none" stroke="#999" /></svg></IconButton>
          <IconButton aria-label="Close"><svg width="13" height="12" viewBox="0 0 13 12"><path d="m3 1 8 8m0-8-8 8" stroke="#888" /></svg></IconButton>
        </WindowButtons>
      </TitleBar>

      <TabRow>
        <RibbonTab $width={44} $kind="file">File</RibbonTab>
        <RibbonTab $width={47} $kind="active">Home</RibbonTab>
        <RibbonTab $width={38}>Edit</RibbonTab>
        <RibbonTab $width={52}>Review</RibbonTab>
        <RibbonTab $width={46}>Forms</RibbonTab>
        <RibbonTab $width={54}>Protect</RibbonTab>
        <RibbonTab $width={38}>Help</RibbonTab>
        <FindArea>
          <IconButton aria-label="Collapse ribbon">
            <svg width="8" height="7" viewBox="0 0 8 7"><path d="M.7 5.500 4 1.500l3.300 4c-1 .8-2 0-3.300-.8-1.300.8-2.300 1.600-3.300.8z" fill="#fff" stroke="#666" /></svg>
          </IconButton>
          <FindBox>
            <FindInput aria-label="Find" placeholder="Find" />
            <svg width="10" height="10" viewBox="0 0 10 10"><circle cx="6" cy="4" r="3" fill="none" stroke="#3477ba" strokeWidth="1.500" /><path d="M4 6 .8 9.200" stroke="#2b5f99" strokeWidth="2" /></svg>
            <Caret />
          </FindBox>
          <IconButton aria-label="Find next"><FindArrow /></IconButton>
          <IconButton aria-label="Find previous"><FindArrow up /></IconButton>
        </FindArea>
      </TabRow>

      <Ribbon>
        <Group $width={148}>
          <GroupItems $pad={6}>
            <ToolButton $width={34} $state="on"><HandIcon />Hand</ToolButton>
            <ToolButton $width={32}><ZoomIcon />Zoom<Caret /></ToolButton>
            <SmallTools>
              <SmallTool><FitIcon kind="width" />Fit Width</SmallTool>
              <SmallTool><FitIcon kind="page" />Fit Page</SmallTool>
              <SmallTool><FitIcon kind="rotate" />Rotate View</SmallTool>
            </SmallTools>
          </GroupItems>
          <GroupLabel>View</GroupLabel>
        </Group>
        <Group $width={119}>
          <GroupItems $pad={2}>
            <ToolButton $width={36}><SelectIcon />Select<Caret /></ToolButton>
            <ToolButton $width={31}><TypeIcon /><span>Type<br />Text</span></ToolButton>
            <ToolButton $width={48}><SignIcon />QuickSign<Caret /></ToolButton>
          </GroupItems>
          <GroupLabel>Tools</GroupLabel>
        </Group>
        <Group $width={82} $tinted>
          <GroupItems $pad={4}>
            <ToolButton $width={34}><PdfIcon />PDF<Caret /></ToolButton>
            <ToolButton $width={41} $state="hover"><CombineIcon />Combine</ToolButton>
          </GroupItems>
          <GroupLabel>Create</GroupLabel>
        </Group>
        <Group $width={142}>
          <GroupItems $pad={3}>
            {convertTargets.map(([kind, label]) => (
              <ToolButton key={kind} $width={34}>
                <ConvertIcon kind={kind} />
                <span>
                  To
                  {kind === "other" ? <OtherLabel>{label}<Caret /></OtherLabel> : <><br />{label}</>}
                </span>
              </ToolButton>
            ))}
          </GroupItems>
          <GroupLabel>Convert</GroupLabel>
        </Group>
      </Ribbon>

      <Work>
        <Sidebar>
          <SideTab><PagesIcon /><SideLabel>Pages</SideLabel></SideTab>
          <SideTab><LayersIcon /><SideLabel>Layers</SideLabel></SideTab>
        </Sidebar>
        <Viewer>
          <DocTabs>
            <DocTab>
              <svg width="21" height="14" viewBox="0 0 21 14" aria-hidden="true" />
              <PdfFileIcon />
              <DocName>PROJET DOUM BKO TABASKI 2021 FOND...</DocName>
              <IconButton aria-label="Close document"><svg width="9" height="8" viewBox="0 0 9 8"><path d="m1.500 1 6 6m0-6-6 6" stroke="#444" /></svg></IconButton>
            </DocTab>
            <IconButton aria-label="Document list"><Caret size={9} color="#555" /></IconButton>
          </DocTabs>
          <ViewerBody>
            <Canvas>
              <Sheet><FoundationPlan /></Sheet>
            </Canvas>
            <ScrollTrack>
              <svg width="8" height="6" viewBox="0 0 8 6"><path d="M1 5l3-3.500L7 5" fill="none" stroke="#555" strokeWidth="1.400" /></svg>
              <ScrollGap $grow={308} />
              <ScrollThumb />
              <ScrollGap $grow={4} />
              <svg width="8" height="6" viewBox="0 0 8 6"><path d="M1 1l3 3.500L7 1" fill="none" stroke="#555" strokeWidth="1.400" /></svg>
            </ScrollTrack>
          </ViewerBody>
        </Viewer>
      </Work>

      <StatusBar>
        <span />
        <PageNav>
          <IconButton aria-label="First page"><NavArrow kind="first" /></IconButton>
          <IconButton aria-label="Previous page"><NavArrow kind="prev" /></IconButton>
          <StatusField $width={59} aria-label="Page" defaultValue="1 of 1" />
          <IconButton aria-label="Next page"><NavArrow kind="next" /></IconButton>
          <IconButton aria-label="Last page"><NavArrow kind="last" /></IconButton>
          <IconButton aria-label="Previous view"><GreenArrow back /></IconButton>
          <IconButton aria-label="Next view"><GreenArrow /></IconButton>
        </PageNav>
        <ViewControls>
          {["Single page", "Continuous", "Facing", "Continuous facing", "Full screen", "Tiled"].map((name, i) => (
            <ViewMode key={name} $on={i === 0} aria-label={name}><ModeIcon index={i} /></ViewMode>
          ))}
          <StatusField $width={38} aria-label="Zoom level" defaultValue="150%" />
          <IconButton aria-label="Zoom out"><RoundSign /></IconButton>
          <ZoomSlider type="range" aria-label="Zoom" min={0} max={100} defaultValue={56} />
          <IconButton aria-label="Zoom in"><RoundSign plus /></IconButton>
        </ViewControls>
      </StatusBar>

      <Taskbar>
        <AppGrid>
          {apps.map((a) => (
            <AppButton key={a.name} aria-label={a.name} $run={a.run} $active={a.active}>
              <svg width={a.size ?? 18} height={a.size ?? 18} viewBox="0 0 20 20">{a.art}</svg>
            </AppButton>
          ))}
          <AppButton aria-label="Nitro Pro" $run><NitroLogo size={18} /></AppButton>
        </AppGrid>
        <Tray>
          <svg width="20" height="14" viewBox="0 0 20 14" fill="none" stroke="#fff" strokeWidth="1.200"><path d="M1 1h15v12H1zM16 3h3v10h-4M3.500 3.700h10" /><path d="M3.500 6.500h4v4h-4zM9.500 6.500h4M9.500 8.500h4M9.500 10.500h4" /></svg>
          <svg width="21" height="8" viewBox="0 0 21 8"><path d="m9 7 5-5 5 5" fill="none" stroke="#fff" strokeWidth="1.300" /></svg>
          <svg width="14" height="12" viewBox="0 0 14 12"><path d="M5 4h7.500v6H5z" fill="#fff" stroke="#fff" /><path d="M13.500 5.500v3M0 2.500h2M0 4.500h2M2 1.500h2v4H2zM3 6v3h2" fill="none" stroke="#fff" /></svg>
          <svg width="15" height="15" viewBox="0 0 15 15" fill="none" stroke="#fff"><circle cx="7" cy="7" r="6" /><path d="M7 1c-4 3-4 9 0 12M7 1c3.500 3 3.500 6 2.500 8M1 5h12M1 9h8M7 1v12" /><circle cx="11.500" cy="11.500" r="3" fill="#182843" /><path d="m9.500 9.500 4 4" /></svg>
          <svg width="15" height="13" viewBox="0 0 15 13" fill="none" stroke="#fff"><path d="M1 4.500h2.500L6.500 1.500v10l-3-3H1zM8.500 4.500c1 1 1 3 0 4M10.500 3c2 2 2 5 0 7M12.500 1.500c3 3 3 7 0 10" /></svg>
          <Lang>FRA</Lang>
          <Clock>15:25<br />14/09/2021</Clock>
          <svg width="15" height="15" viewBox="0 0 15 15"><path d="M1 1h13v10H8l-3 3v-3H1z" fill="#fff" /><path d="M3 4h9M3 6.500h9M3 9h5" stroke="#182843" /><circle cx="11.500" cy="11" r="3" fill="#fff" stroke="#182843" /></svg>
        </Tray>
      </Taskbar>
    </Window>
  );
}
